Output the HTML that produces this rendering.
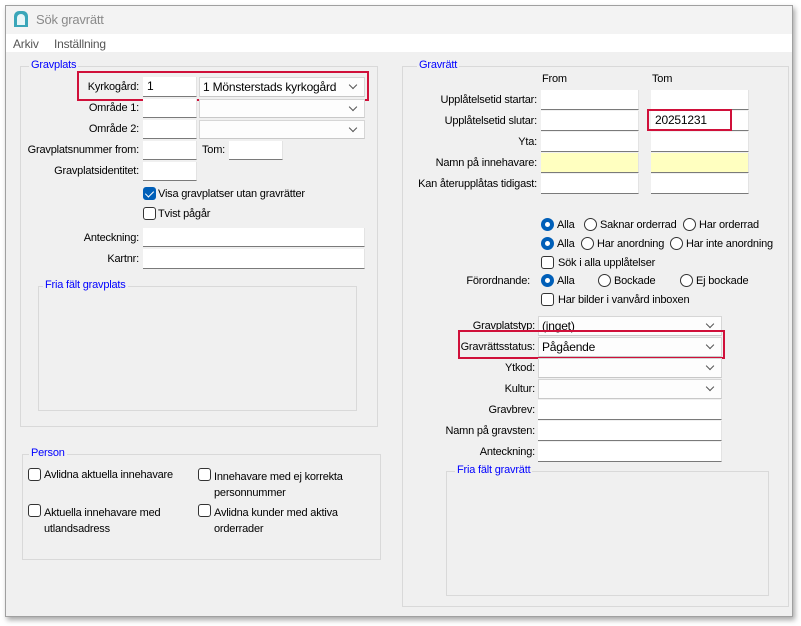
<!DOCTYPE html>
<html><head><meta charset="utf-8"><style>
*{box-sizing:border-box;margin:0;padding:0}
body{width:801px;height:626px;background:#fff;position:relative;overflow:hidden;font-family:"Liberation Sans",sans-serif;font-size:11px;letter-spacing:-0.2px;color:#000}
div,span{position:absolute}
.win{left:5px;top:5px;width:788px;height:612px;background:#f0f0f0;border:1px solid #a0a0a0;box-shadow:2px 3px 5px rgba(0,0,0,.35)}
.l{text-align:right;white-space:nowrap}
.t{white-space:nowrap}
.o{margin-top:1px}
.i{background:#fff;border-bottom:1px solid #7a7a7a;border-right:1px solid #e3e3e3;padding-left:4px;font-size:12px}
.y{background:#ffffc0}
.c{background:#fdfdfd;border:1px solid #d6d6d6;border-bottom-color:#c8c8c8;padding-left:3px;font-size:12px}
.c:after{content:"";position:absolute;right:8px;top:4px;width:5px;height:5px;border-right:1px solid #555;border-bottom:1px solid #555;transform:rotate(45deg)}
.g{border:1px solid #d9d9d9}
.lg{background:#f0f0f0;color:#0000ff;padding:0 2px;white-space:nowrap}
.cb{width:13px;height:13px;border:1px solid #333;border-radius:3px;background:#fff}
.cb.k{background:#005fb8;border-color:#005fb8}
.cb.k:after{content:"";position:absolute;left:3px;top:1px;width:4px;height:7px;border-right:1.5px solid #fff;border-bottom:1.5px solid #fff;transform:rotate(45deg)}
.r{width:13px;height:13px;border:1px solid #333;border-radius:50%;background:#fff}
.r.k{background:#005fb8;border-color:#005fb8}
.r.k:after{content:"";position:absolute;left:3px;top:3px;width:5px;height:5px;border-radius:50%;background:#fff}
.red{border:2px solid #d0103a}
</style></head><body>
<div class="win"></div>
<div style="left:6px;top:6px;width:786px;height:28px;background:#f3f3f3"></div>
<div style="left:14px;top:11px;width:14px;height:16px;background:#3aa6b9;border-radius:5px 5px 0 0"></div>
<div style="left:17px;top:14px;width:8px;height:11px;background:#e8f6f8;border-radius:4px 4px 0 0"></div>
<span class="t" style="left:36px;top:12px;font-size:13px;color:#8a8a8a">Sök gravrätt</span>
<div style="left:6px;top:34px;width:786px;height:18px;background:#fff"></div>
<span class="t" style="left:13px;top:37px;font-size:12px;color:#555">Arkiv</span>
<span class="t" style="left:54px;top:37px;font-size:12px;color:#555">Inställning</span>

<!-- Gravplats -->
<div class="g" style="left:20px;top:66px;width:358px;height:361px"></div>
<span class="lg" style="left:29px;top:59px">Gravplats</span>
<span class="l" style="left:0;width:139px;top:81px">Kyrkogård:</span>
<div class="i" style="left:143px;top:77px;width:54px;height:20px;line-height:19px">1</div>
<div class="c" style="left:199px;top:77px;width:166px;height:20px;line-height:18px">1 Mönsterstads kyrkogård</div>
<div class="red" style="left:77px;top:71px;width:292px;height:30px"></div>
<span class="l" style="left:0;width:139px;top:102px">Område 1:</span>
<div class="i" style="left:143px;top:99px;width:54px;height:19px"></div>
<div class="c" style="left:199px;top:99px;width:166px;height:19px"></div>
<span class="l" style="left:0;width:139px;top:123px">Område 2:</span>
<div class="i" style="left:143px;top:120px;width:54px;height:19px"></div>
<div class="c" style="left:199px;top:120px;width:166px;height:19px"></div>
<span class="l" style="left:0;width:139px;top:144px">Gravplatsnummer from:</span>
<div class="i" style="left:143px;top:141px;width:54px;height:19px"></div>
<span class="t" style="left:202px;top:144px">Tom:</span>
<div class="i" style="left:229px;top:141px;width:54px;height:19px"></div>
<span class="l" style="left:0;width:139px;top:165px">Gravplatsidentitet:</span>
<div class="i" style="left:143px;top:162px;width:54px;height:19px"></div>
<div class="cb k" style="left:143px;top:187px"></div>
<span class="t" style="left:158px;top:188px">Visa gravplatser utan gravrätter</span>
<div class="cb" style="left:143px;top:207px"></div>
<span class="t" style="left:158px;top:208px">Tvist pågår</span>
<span class="l" style="left:0;width:139px;top:232px">Anteckning:</span>
<div class="i" style="left:143px;top:228px;width:222px;height:19px"></div>
<span class="l" style="left:0;width:139px;top:253px">Kartnr:</span>
<div class="i" style="left:143px;top:249px;width:222px;height:20px"></div>
<div class="g" style="left:38px;top:286px;width:319px;height:125px"></div>
<span class="lg" style="left:43px;top:279px">Fria fält gravplats</span>

<!-- Person -->
<div class="g" style="left:22px;top:454px;width:359px;height:106px"></div>
<span class="lg" style="left:29px;top:447px">Person</span>
<div class="cb" style="left:28px;top:468px"></div>
<span class="t" style="left:44px;top:469px">Avlidna aktuella innehavare</span>
<div class="cb" style="left:198px;top:468px"></div>
<span class="t" style="left:214px;top:469px;line-height:16px">Innehavare med ej korrekta<br>personnummer</span>
<div class="cb" style="left:28px;top:504px"></div>
<span class="t" style="left:44px;top:505px;line-height:16px">Aktuella innehavare med<br>utlandsadress</span>
<div class="cb" style="left:198px;top:504px"></div>
<span class="t" style="left:214px;top:505px;line-height:16px">Avlidna kunder med aktiva<br>orderrader</span>

<!-- Gravrätt -->
<div class="g" style="left:402px;top:66px;width:387px;height:541px"></div>
<span class="lg" style="left:417px;top:59px">Gravrätt</span>
<span class="t" style="left:542px;top:73px">From</span>
<span class="t" style="left:652px;top:73px">Tom</span>
<span class="l" style="left:300px;width:237px;top:94px">Upplåtelsetid startar:</span>
<span class="l" style="left:300px;width:237px;top:115px">Upplåtelsetid slutar:</span>
<span class="l" style="left:300px;width:237px;top:136px">Yta:</span>
<span class="l" style="left:300px;width:237px;top:157px">Namn på innehavare:</span>
<span class="l" style="left:300px;width:237px;top:178px">Kan återupplåtas tidigast:</span>
<div class="i" style="left:541px;top:90px;width:98px;height:20px"></div>
<div class="i" style="left:651px;top:90px;width:98px;height:20px"></div>
<div class="i" style="left:541px;top:111px;width:98px;height:20px"></div>
<div class="i" style="left:651px;top:111px;width:98px;height:20px;line-height:19px">20251231</div>
<div class="i" style="left:541px;top:132px;width:98px;height:20px"></div>
<div class="i" style="left:651px;top:132px;width:98px;height:20px"></div>
<div class="i y" style="left:541px;top:153px;width:98px;height:20px"></div>
<div class="i y" style="left:651px;top:153px;width:98px;height:20px"></div>
<div class="i" style="left:541px;top:174px;width:98px;height:20px"></div>
<div class="i" style="left:651px;top:174px;width:98px;height:20px"></div>
<div class="red" style="left:647px;top:109px;width:85px;height:22px"></div>

<div class="r k" style="left:541px;top:218px"></div><span class="t" style="left:557px;top:219px">Alla</span>
<div class="r" style="left:584px;top:218px"></div><span class="t" style="left:600px;top:219px">Saknar orderrad</span>
<div class="r" style="left:683px;top:218px"></div><span class="t" style="left:699px;top:219px">Har orderrad</span>
<div class="r k" style="left:541px;top:237px"></div><span class="t" style="left:557px;top:238px">Alla</span>
<div class="r" style="left:581px;top:237px"></div><span class="t" style="left:597px;top:238px">Har anordning</span>
<div class="r" style="left:670px;top:237px"></div><span class="t" style="left:686px;top:238px">Har inte anordning</span>
<div class="cb" style="left:541px;top:256px"></div><span class="t" style="left:558px;top:257px">Sök i alla upplåtelser</span>
<span class="l" style="left:400px;width:130px;top:275px">Förordnande:</span>
<div class="r k" style="left:541px;top:274px"></div><span class="t" style="left:557px;top:275px">Alla</span>
<div class="r" style="left:598px;top:274px"></div><span class="t" style="left:614px;top:275px">Bockade</span>
<div class="r" style="left:680px;top:274px"></div><span class="t" style="left:696px;top:275px">Ej bockade</span>
<div class="cb" style="left:541px;top:293px"></div><span class="t" style="left:558px;top:294px">Har bilder i vanvård inboxen</span>

<span class="l" style="left:400px;width:135px;top:320px">Gravplatstyp:</span>
<div class="c" style="left:538px;top:316px;width:184px;height:20px;line-height:18px">(inget)</div>
<span class="l" style="left:400px;width:135px;top:341px">Gravrättsstatus:</span>
<div class="c" style="left:538px;top:337px;width:184px;height:20px;line-height:18px">Pågående</div>
<div class="red" style="left:458px;top:330px;width:267px;height:29px"></div>
<span class="l" style="left:400px;width:135px;top:362px">Ytkod:</span>
<div class="c" style="left:538px;top:358px;width:184px;height:20px"></div>
<span class="l" style="left:400px;width:135px;top:383px">Kultur:</span>
<div class="c" style="left:538px;top:379px;width:184px;height:20px"></div>
<span class="l" style="left:400px;width:135px;top:404px">Gravbrev:</span>
<div class="i" style="left:538px;top:400px;width:184px;height:20px"></div>
<span class="l" style="left:400px;width:135px;top:425px">Namn på gravsten:</span>
<div class="i" style="left:538px;top:421px;width:184px;height:20px"></div>
<span class="l" style="left:400px;width:135px;top:446px">Anteckning:</span>
<div class="i" style="left:538px;top:442px;width:184px;height:20px"></div>
<div class="g" style="left:446px;top:471px;width:323px;height:125px"></div>
<span class="lg" style="left:455px;top:464px">Fria fält gravrätt</span>
</body></html>
